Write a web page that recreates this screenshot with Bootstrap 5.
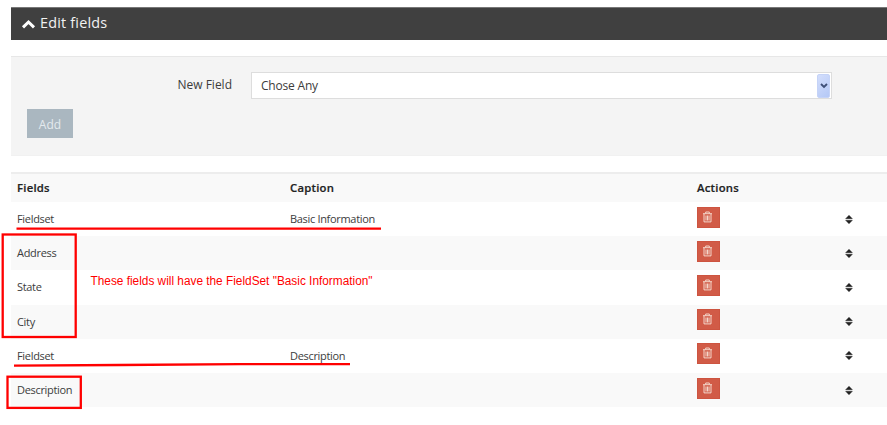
<!DOCTYPE html>
<html lang="en">
<head>
<meta charset="utf-8">
<meta name="viewport" content="width=device-width, initial-scale=1">
<title>Edit fields</title>
<link href="https://cdn.jsdelivr.net/npm/bootstrap@5.3.0/dist/css/bootstrap.min.css" rel="stylesheet">
<style>
body{font-family:"Open Sans","Noto Sans",sans-serif;font-size:11px;color:#3c3c3c;background:#fff;height:425px;overflow:hidden}
.page-area{padding:7px 0 0 11px}
.title-bar{height:33px;background:#404040;border-top:1px solid #777;color:#f2f2f2;padding-left:10px}
.title-bar h1{font-size:14.4px;letter-spacing:.2px;font-weight:400;line-height:20px;margin-top:-2px}
.form-panel{height:100px;margin-top:16px;background:#f4f4f4;border-top:1px solid #e7e7e7;border-bottom:1px solid #f1f1f1;padding:15px 16px 0}
.field-label{width:205px;font-size:12px;line-height:26px}
.pick{width:581px;height:27px;margin-left:19px;border:1px solid #ddd;background:#fff;padding:1px 1px 1px 9px;font-size:12px;letter-spacing:-.2px}
.pick span:first-child{padding-top:1px}
.pick-arrow{width:13px;height:24px;border-radius:2px;background:linear-gradient(135deg,#d3defc,#b4c8f6);border:1px solid #c5d3f7}
.add-btn{--bs-btn-padding-x:0;--bs-btn-padding-y:2px 0;--bs-btn-border-radius:0;--bs-btn-bg:#aab7c0;--bs-btn-border-color:#aab7c0;--bs-btn-color:#e4eaee;width:46px;height:29px;margin-top:10px;font-size:12px}
.fields-table{width:876px;margin:16px 0 0;table-layout:fixed;border-top:2px solid #ededed;--bs-table-color:#3c3c3c;--bs-table-bg:transparent}
.fields-table>:not(caption)>*>*{border:0;padding:0 6px;vertical-align:middle;box-shadow:none;line-height:16px}
.fields-table thead tr{height:29px;background:#f9f9f9}
.fields-table thead th{font-size:11.3px;font-weight:600;letter-spacing:.25px;color:#222;-webkit-text-stroke:.2px #222}
.fields-table tbody tr{height:34.2px}
.fields-table tbody td{letter-spacing:-.32px}
.fields-table tbody tr:nth-child(even){background:#f9f9f9}
.del-btn{--bs-btn-padding-x:0;--bs-btn-padding-y:0;--bs-btn-border-radius:0;--bs-btn-bg:#d15b47;--bs-btn-border-color:#cd5440;width:23px;height:21px;margin:-4px 0 0 -.5px}
.del-btn svg{margin:-1px 1px 0 0}
.sort-icon{display:block;margin-left:-.5px}
.notes{left:0;top:0;width:887px;height:425px;pointer-events:none}
.notes text{font-family:"Liberation Sans",Arial,sans-serif;font-size:12.5px;fill:#f00}
</style>
<script src="https://cdn.jsdelivr.net/npm/bootstrap@5.3.0/dist/js/bootstrap.bundle.min.js"></script>
</head>
<body class="position-relative">
<svg class="d-none">
  <symbol id="trash" viewBox="0 0 11 12"><path d="M1 2.700h9M3.700 2.500V1h3.600v1.500M2 3v7.900h7V3M4 4.500V9.500M5.500 4.500V9.500M7 4.500V9.500" fill="none" stroke="#f6ddd2" stroke-width=".95"/></symbol>
  <symbol id="sort" viewBox="0 0 8 9"><path d="M.6 3.700h6.800L4 .2zM.6 5.300h6.800L4 8.800z" fill="#222" stroke="#222" stroke-width=".4" stroke-linejoin="round"/></symbol>
</svg>
<main class="page-area">
  <header class="title-bar d-flex align-items-center">
    <svg width="15" height="10" viewBox="0 0 15 10"><path d="M2 8.300 7.500 3l5.500 5.300" fill="none" stroke="#fff" stroke-width="3"/></svg>
    <h1 class="mb-0 ms-1">Edit fields</h1>
  </header>
  <section class="form-panel">
    <div class="d-flex">
      <label class="field-label text-end">New Field</label>
      <div class="pick d-flex align-items-center justify-content-between">
        <span>Chose Any</span>
        <span class="pick-arrow d-flex align-items-center justify-content-center"><svg width="8" height="6" viewBox="0 0 8 6"><path d="M1 1l3 3 3-3" fill="none" stroke="#3f5078" stroke-width="1.900"/></svg></span>
      </div>
    </div>
    <button type="button" class="btn add-btn">Add</button>
  </section>
  <table class="table fields-table">
    <colgroup><col style="width:273px"><col style="width:407px"><col style="width:148px"><col style="width:48px"></colgroup>
    <thead><tr><th>Fields</th><th>Caption</th><th>Actions</th><th></th></tr></thead>
    <tbody>
      <tr><td>Fieldset</td><td>Basic Information</td><td><button type="button" class="btn del-btn d-flex align-items-center justify-content-center" aria-label="Delete"><svg width="11" height="12"><use href="#trash"/></svg></button></td><td><svg class="sort-icon" width="8" height="9"><use href="#sort"/></svg></td></tr>
      <tr><td>Address</td><td></td><td><button type="button" class="btn del-btn d-flex align-items-center justify-content-center" aria-label="Delete"><svg width="11" height="12"><use href="#trash"/></svg></button></td><td><svg class="sort-icon" width="8" height="9"><use href="#sort"/></svg></td></tr>
      <tr><td>State</td><td></td><td><button type="button" class="btn del-btn d-flex align-items-center justify-content-center" aria-label="Delete"><svg width="11" height="12"><use href="#trash"/></svg></button></td><td><svg class="sort-icon" width="8" height="9"><use href="#sort"/></svg></td></tr>
      <tr><td>City</td><td></td><td><button type="button" class="btn del-btn d-flex align-items-center justify-content-center" aria-label="Delete"><svg width="11" height="12"><use href="#trash"/></svg></button></td><td><svg class="sort-icon" width="8" height="9"><use href="#sort"/></svg></td></tr>
      <tr><td>Fieldset</td><td>Description</td><td><button type="button" class="btn del-btn d-flex align-items-center justify-content-center" aria-label="Delete"><svg width="11" height="12"><use href="#trash"/></svg></button></td><td><svg class="sort-icon" width="8" height="9"><use href="#sort"/></svg></td></tr>
      <tr><td>Description</td><td></td><td><button type="button" class="btn del-btn d-flex align-items-center justify-content-center" aria-label="Delete"><svg width="11" height="12"><use href="#trash"/></svg></button></td><td><svg class="sort-icon" width="8" height="9"><use href="#sort"/></svg></td></tr>
    </tbody>
  </table>
</main>
<!-- Annotations over the table -->
<svg class="notes position-absolute" viewBox="0 0 887 425">
  <g fill="none" stroke="#f00" stroke-width="2.300">
    <path d="M16.500 228.700H381M14 365.700 120 365 240 364.200H350"/>
    <rect x="2.700" y="234.500" width="73" height="102.500"/>
    <rect x="7.500" y="376.700" width="73.300" height="31.200"/>
  </g>
  <text x="90.500" y="285" textLength="282" lengthAdjust="spacingAndGlyphs">These fields will have the FieldSet "Basic Information"</text>
</svg>
</body>
</html>
